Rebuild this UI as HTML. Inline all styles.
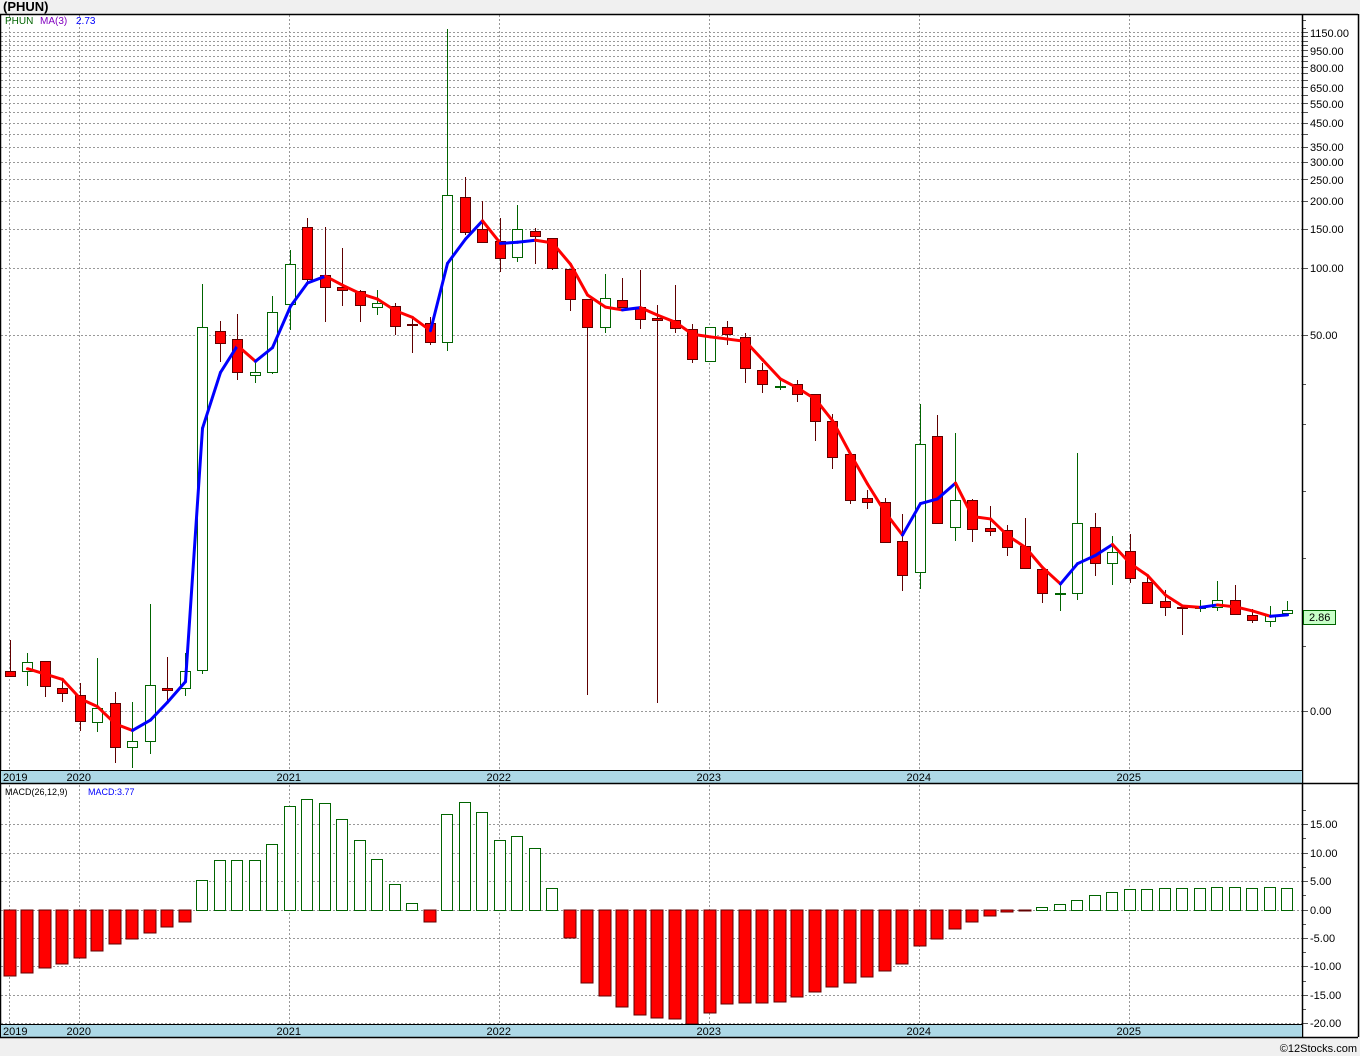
<!DOCTYPE html>
<html><head><meta charset="utf-8"><style>
html,body{margin:0;padding:0;background:#f0f0f0;width:1360px;height:1056px;overflow:hidden;font-family:"Liberation Sans","DejaVu Sans",sans-serif}
svg{display:block}
</style></head><body>
<svg id="s" width="1360" height="1056" xmlns="http://www.w3.org/2000/svg" font-family="Liberation Sans, DejaVu Sans, sans-serif">
<rect x="0" y="0" width="1360" height="1056" fill="#f0f0f0"/>
<text x="3" y="11" font-size="13" font-weight="bold" fill="#000">(PHUN)</text>
<rect x="0" y="14" width="1358" height="1024" fill="#fff"/>
<g id="g"></g>
<text x="1357" y="1052" font-size="11" fill="#000" text-anchor="end">©12Stocks.com</text>
</svg>
<script>
var g=document.getElementById('g'),h='';
function L(x1,y1,x2,y2,c,w,d){h+='<line x1="'+x1+'" y1="'+y1+'" x2="'+x2+'" y2="'+y2+'" stroke="'+c+'" stroke-width="'+(w||1)+'"'+(d?' stroke-dasharray="'+d+'"':'')+'/>';}
function R(x,y,w,hh,f,s){h+='<rect x="'+x+'" y="'+y+'" width="'+w+'" height="'+hh+'" fill="'+f+'"'+(s?' stroke="'+s+'" stroke-width="1"':'')+'/>';}
function T(x,y,t,c,sz,a){h+='<text x="'+x+'" y="'+y+'" font-size="'+(sz||11)+'" fill="'+(c||'#000')+'"'+(a?' text-anchor="'+a+'"':'')+'>'+t+'</text>';}
function py(p){return 268+222.6*Math.log10(100/p);}
function yp(y){return 100*Math.pow(10,-(y-268)/222.6);}
var lv=[1150,1100,1050,1000,950,900,850,800,750,700,650,600,550,500,450,400,350,300,250,200,150,100,50,1.02];
lv.forEach(function(v){var y=Math.round(py(v))+.5;L(1,y,1302,y,'#999',1,'2,2');L(1302,y,1308,y,'#555',1);});
[1300,1200,30,20,10,5,2].forEach(function(v){var y=Math.round(py(v))+.5;if(y>15&&y<770)L(1302,y,1306,y,'#555',1);});
var yrs=[[9.5,'2019'],[79.5,'2020'],[289.5,'2021'],[499.5,'2022'],[709.5,'2023'],[919.5,'2024'],[1129.5,'2025']];
yrs.forEach(function(a){L(a[0],15,a[0],770,'#999',1,'2,2');L(a[0],785,a[0],1024,'#999',1,'2,2');});
[824,853,881,910,938,966,995,1023].forEach(function(y){L(1,y+.5,1302,y+.5,'#999',1,'2,2');L(1302,y+.5,1308,y+.5,'#555',1);});
[810,838,867,895,924,952,981,1009].forEach(function(y){L(1302,y+.5,1306,y+.5,'#555',1);});
var C=[['r',671,676,640,676],['g',662,671,653,686],['r',661,686,661,697],['r',688,693,680,702],['r',695,721,683,731],['g',708,722,658,732],['r',703,747,692,763],['g',741,747,702,768],['g',685,741,604,754],['r',688,690,657,702],['g',671,688,653,696],['g',327,670,284,674],['r',331,343,321,362],['r',339,372,314,380],['g',372,375,361,383],['g',312,372,296,374],['g',264,304,250,330],['r',227,279,218,282],['r',275,287,227,322],['r',287,290,248,306],['r',291,305,290,322],['g',303,307,290,315],['r',306,326,303,335],['r',324,325,318,353],['r',323,342,317,345],['g',195,342,29,351],['r',197,232,177,235],['r',229,242,201,242],['r',241,258,218,272],['g',229,257,205,262],['r',231,236,228,264],['r',238,268,238,270],['r',269,299,269,311],['r',299,327,299,695],['g',298,327,274,333],['r',300,307,278,307],['r',307,319,270,329],['r',318,320,305,703],['r',320,328,285,333],['r',329,359,324,363],['g',327,361,327,361],['r',327,334,321,345],['r',337,368,333,383],['r',370,384,363,393],['g',386,387,379,390],['r',384,394,380,402],['r',394,421,394,441],['r',421,457,414,469],['r',454,500,454,504],['r',498,502,490,509],['r',502,542,498,543],['r',541,575,514,591],['g',444,572,404,589],['r',436,523,415,523],['g',500,527,433,541],['r',500,529,499,542],['r',528,531,506,536],['r',530,547,525,556],['r',546,568,518,568],['r',569,593,569,603],['g',593,594,583,611],['g',523,593,453,600],['r',527,563,513,576],['g',552,563,536,585],['r',551,578,534,583],['r',582,603,577,604],['r',601,607,590,616],['r',607,608,607,635],['g',607,608,600,612],['g',600,607,581,611],['r',600,614,585,614],['r',615,620,609,623],['g',615,621,606,627],['g',610,613,601,613]];
function cx(i){return Math.round(9.5+17.5*i);}
C.forEach(function(c,i){var x=cx(i)+.5,gr=c[0]=='g';var wc=gr?'#006400':'#600000';
L(x,c[3],x,c[4],wc,1);
var hh=Math.max(1,c[2]-c[1]);
if(gr)R(x-5,c[1]+.5,10,hh,'#fff','#006400');else R(x-5,c[1]+.5,10,hh,'#ff0000','#600000');});
var cl=C.map(function(c){return yp(c[0]=='g'?c[1]:c[2]);});
var pts=[];for(var i=0;i<C.length;i++){if(i<1){pts.push(null);continue;}var a=i<2?(cl[i]+cl[i-1])/2:(cl[i]+cl[i-1]+cl[i-2])/3;pts.push([cx(i)+.5,py(a)]);}
for(var i=2;i<pts.length;i++){var p=pts[i-1],q=pts[i];if(!p)continue;h+='<line x1="'+p[0]+'" y1="'+p[1]+'" x2="'+q[0]+'" y2="'+q[1]+'" stroke="'+(q[1]<p[1]?'#0000ff':'#ff0000')+'" stroke-width="3" stroke-linecap="round"/>';}
var M=[976,973,968,964,958,951,944,939,933,927,922,880,860,860,860,844,806,799,803,819,840,859,884,903,922,814,802,812,840,836,848,888,938,983,996,1007,1015,1018,1019,1026,1013,1004,1003,1003,1002,997,992,987,983,977,971,964,946,939,929,922,916,912,911,907,904,900,895,892,889,889,888,888,888,887,887,888,887,888];
M.forEach(function(y,i){var x=cx(i)-6;var red=(y>910)||i==24;if(i==58)red=true;
if(red)R(x,910,12,Math.max(1,Math.min(y,1024)-910),'#ff0000','#600000');else R(x+.5,y+.5,11,910-y,'#fff','#006400');});
T(5,24,'PHUN','#006400',10);T(40,24,'MA(3)','#8000c0',10);T(76,24,'2.73','#0000ff',10);
T(5,795,'MACD(26,12,9)','#000',9);T(88,795,'MACD:3.77','#0000ff',9);
L(0,14.5,1358,14.5,'#000',1.5);L(1302.5,14,1302.5,1037,'#000',1.5);L(0.5,14,0.5,1037,'#000',1.5);L(1358.5,14,1358.5,1037,'#000',1.5);
R(1,770,1301,13,'#add8e6');L(0,770.5,1302,770.5,'#000',1);L(0,783.5,1358,783.5,'#000',1.5);
R(1,1024,1301,13,'#add8e6');L(0,1024.5,1302,1024.5,'#000',1);L(0,1037.5,1358,1037.5,'#000',1.5);
yrs.forEach(function(a,i){var x=i==0?3:a[0]-13;T(x,781,a[1],'#000',11);T(x,1035,a[1],'#000',11);});
[[1150,33],[950,51],[800,68],[650,88],[550,104],[450,123],[350,147],[300,162],[250,180],[200,201],[150,229],[100,268],[50,335],[0,711]].forEach(function(a){T(1310,a[1]+4,a[0].toFixed(2),'#000',11);});
[[15,824],[10,853],[5,881],[0,910],[-5,938],[-10,966],[-15,995],[-20,1023]].forEach(function(a){T(1310,a[1]+4,(a[0]<0?'-':'')+Math.abs(a[0]).toFixed(2),'#000',11);});
R(1303.5,610.5,32,14,'#c8ffc8','#006400');T(1309,621,'2.86','#000',11);
g.innerHTML=h;
</script>
</body></html>
